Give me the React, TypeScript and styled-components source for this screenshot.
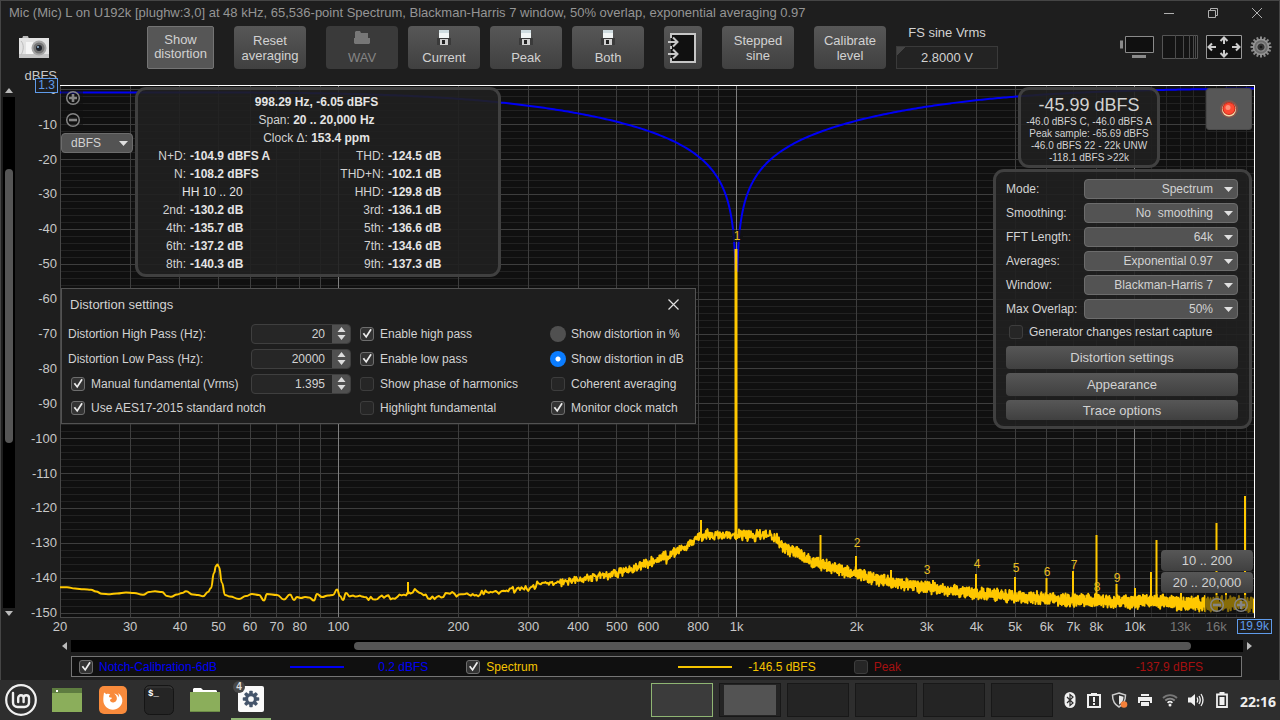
import React from "react";
import styled, { createGlobalStyle, css } from "styled-components";

const GlobalStyle = createGlobalStyle`
  *, *::before, *::after { box-sizing: border-box; }
  html, body { margin: 0; background: #1e1e1e; }
  body, button, input, select {
    font-family: "Liberation Sans", Arial, sans-serif;
    font-size: 13px;
    color: #d2d2d2;
  }
  button, input, select { margin: 0; padding: 0; border: 0; background: none; }
  svg { display: block; }
`;

/* ---------- chart geometry and data ---------- */

const PLOT_W = 1195;
const PLOT_H = 533;
const DECADE = 398.3;
const freqX = (f: number) => Math.log10(f / 20) * DECADE;
const dbY = (db: number) => 4.7 - db * 3.49;
const pctX = (x: number) => `${(x / PLOT_W) * 100}%`;
const pctY = (y: number) => `${(y / PLOT_H) * 100}%`;

type Point = [number, number];

const majorFreqs = [30, 40, 50, 60, 70, 80, 90, 200, 300, 400, 500, 600, 700, 800, 900, 2000, 3000, 4000, 5000, 6000, 7000, 8000, 9000];
const decadeFreqs = [100, 1000, 10000];
const minorFreqs = [11, 12, 13, 14, 15, 16, 17, 18, 19].map((k) => k * 1000);

const yTicks = Array.from({ length: 16 }, (_, i) => -10 * i);
const yMinor = Array.from({ length: 76 }, (_, i) => -2 * i).filter((d) => d % 10 !== 0);

const xTicks: { f: number; label: string; dim?: boolean }[] = [
  { f: 20, label: "20" }, { f: 30, label: "30" }, { f: 40, label: "40" }, { f: 50, label: "50" },
  { f: 60, label: "60" }, { f: 70, label: "70" }, { f: 80, label: "80" }, { f: 100, label: "100" },
  { f: 200, label: "200" }, { f: 300, label: "300" }, { f: 400, label: "400" }, { f: 500, label: "500" },
  { f: 600, label: "600" }, { f: 800, label: "800" }, { f: 1000, label: "1k" }, { f: 2000, label: "2k" },
  { f: 3000, label: "3k" }, { f: 4000, label: "4k" }, { f: 5000, label: "5k" }, { f: 6000, label: "6k" },
  { f: 7000, label: "7k" }, { f: 8000, label: "8k" }, { f: 10000, label: "10k" },
  { f: 13000, label: "13k", dim: true }, { f: 16000, label: "16k", dim: true },
];

const harmonicMarks: [string, number, number][] = [
  ["2", 797, 458], ["3", 867, 485], ["4", 917, 479], ["5", 956, 483],
  ["6", 987, 487], ["7", 1014, 480], ["8", 1037, 502], ["9", 1057, 493],
];

const notchPath = (() => {
  const pts: string[] = [];
  for (let x = 0; x <= 1194; x += x > 655 && x < 700 ? 0.25 : 2) {
    const u = 20 * Math.pow(10, x / DECADE) / 998.3;
    const a = Math.abs(1 - u * u);
    const mag = 20 * Math.log10(Math.max(a, 1e-6) / Math.sqrt(a * a + 15.5 * u * u));
    const db = Math.max(mag - 0.8 + (1.3 * x) / 1194, -52);
    pts.push(`${x.toFixed(2)},${dbY(db).toFixed(2)}`);
  }
  return "M" + pts.join("L");
})();

const lowBand: Point[] = [
  [0, 502.3], [7, 502.3], [15, 503.5], [24, 504.3], [31, 504.7], [36, 506.5], [42, 508.7], [50, 509.2],
  [57, 508.5], [66, 507.5], [74, 508], [83, 509.8], [89, 507], [95, 506.3], [102, 507], [107, 511], [111, 511.7],
  [117, 509.5], [122, 508], [126, 506.3], [133, 509.5], [138, 510], [143, 511.3], [148, 507], [151, 503], [154, 488],
  [156, 481], [157.5, 479.5], [159, 482], [162, 498], [165, 510], [170, 511.5], [179, 514], [186, 511],
  [192, 509], [199, 510], [204, 515.5], [207, 509], [217, 510], [224, 514.5], [230, 509.5],
  [234, 515], [237, 512], [241, 513], [245, 512], [249, 512.5], [254, 515.5], [257, 509], [262, 512],
  [268, 510.5], [273, 510], [277, 504.5], [280, 511], [283, 515], [286, 508], [290, 511.5],
];

const centre: Point[] = [
  [290, 511.5], [310, 512.5], [330, 512], [345, 510.5], [356, 506], [366, 511.5], [380, 511], [400, 508],
  [410, 510], [440, 506], [470, 503], [490, 498], [520, 495], [540, 491], [557, 489], [570, 485], [588, 478],
  [610, 471], [625, 463], [634, 455], [640, 450], [712, 450], [718, 455], [726, 464], [740, 469], [750, 476],
  [760, 479], [780, 485], [797, 489], [820, 495], [867, 503], [916, 508], [955, 512], [1013, 515],
  [1075, 517], [1100, 516], [1130, 519], [1194, 519],
];

const interpolate = (pts: Point[], x: number) => {
  for (let i = 1; i < pts.length; i++) {
    if (x <= pts[i][0]) {
      const [x0, y0] = pts[i - 1];
      const [x1, y1] = pts[i];
      return y0 + ((y1 - y0) * (x - x0)) / (x1 - x0);
    }
  }
  return pts[pts.length - 1][1];
};

const smoothPath = (pts: Point[]) => {
  let d = `M${pts[0][0]},${pts[0][1]}`;
  for (let i = 1; i < pts.length; i++) {
    const mx = (pts[i - 1][0] + pts[i][0]) / 2;
    d += `C${mx},${pts[i - 1][1]} ${mx},${pts[i][1]} ${pts[i][0]},${pts[i][1]}`;
  }
  return d;
};

const spectrumPath = (() => {
  let seed = 20170;
  const random = () => {
    seed = (seed * 1664525 + 1013904223) >>> 0;
    return seed / 4294967296;
  };
  let d = "";
  let x = 291;
  while (x < 1194) {
    const amp = x < 400 ? 3.5 : x < 600 ? 4 + (x - 400) / 80 : x < 900 ? 7 : 7 + (x - 900) / 180;
    const step = x < 400 ? 2.2 : x < 540 ? 2 - (x - 400) / 100 : x < 720 ? 0.5 : 0.22;
    const noise = random() + random() - 1;
    d += `L${x.toFixed(2)},${(interpolate(centre, x) + noise * amp).toFixed(2)}`;
    x += step;
  }
  return smoothPath(lowBand) + d;
})();

const spikes: Point[] = [
  [348, 497], [641, 435], [760.5, 450], [796, 471], [831, 485], [873, 495], [916, 489], [955, 492],
  [986.5, 493], [1013, 486], [1036.5, 450], [1056.5, 499], [1075, 503], [1091, 487], [1096.5, 455],
  [1121, 506], [1156.5, 438], [1166, 507], [1185, 411],
];

/* ---------- window frame ---------- */

const Screen = styled.div`
  min-height: 100vh;
  display: flex;
  flex-direction: column;
`;

const AppWindow = styled.main`
  flex: 1;
  display: flex;
  flex-direction: column;
  border: 1px solid #454545;
  border-width: 1px 1px 0;
  background: #1e1e1e;
`;

const TitleBar = styled.header`
  height: 25px;
  padding: 0 16px 2px 8px;
  display: flex;
  align-items: center;
  justify-content: space-between;
`;

const WindowTitle = styled.h1`
  margin: 0;
  font-size: 13px;
  font-weight: 400;
  color: #959595;
  white-space: nowrap;
`;

const WindowControls = styled.div`
  display: flex;
  gap: 32px;
`;

const IconButton = styled.button`
  display: block;
  line-height: 0;
`;

/* ---------- toolbar ---------- */

const Toolbar = styled.div`
  display: flex;
  align-items: flex-start;
  gap: 20px;
  height: 43px;
  padding: 0 7px 0 17px;
`;

const ToolGroup = styled.div`
  display: flex;
  gap: 10px;
`;

const face = css`
  background: linear-gradient(#575757, #404040);
  border-radius: 4px;
`;

const ToolButton = styled.button<{ $pressed?: boolean; $narrow?: boolean; $end?: boolean }>`
  ${face}
  width: ${(p) => (p.$narrow ? 38 : p.$pressed ? 67 : 72)}px;
  height: 43px;
  line-height: 15px;
  display: flex;
  flex-direction: column;
  align-items: center;
  justify-content: ${(p) => (p.$end ? "flex-start" : "center")};
  gap: 4px;
  padding-top: ${(p) => (p.$end ? 4 : 0)}px;
  ${(p) => p.$pressed && "background: #565656; border: 1px solid #747474; border-radius: 2px; line-height: 14px; padding-bottom: 2px;"}
  &:disabled { color: #858585; background: #3a3a3a; }
`;

const CameraButton = styled(IconButton)`
  width: 32px;
  margin: 9px 77px 0 0;
`;

const VoltField = styled.label`
  width: 102px;
  margin-left: -10px;
  text-align: center;
  line-height: 14px;
  position: relative;
  input {
    display: block;
    width: 102px;
    height: 23px;
    margin-top: 6px;
    text-align: center;
    border: 1px solid #3a3a3a;
    background: linear-gradient(135deg, #444 6px, #232323 6px);
  }
`;

const ToolIcons = styled.div`
  display: flex;
  align-items: center;
  gap: 8px;
  margin: 9px 0 0 auto;
`;

const Floppy = () => (
  <svg width="14" height="16" viewBox="0 0 14 16">
    <path d="M2 0h10v7H2z" fill="#cfdce0" />
    <path d="M2 3h10v5H2z" fill="#f2f6f6" />
    <path d="M0 8h14v7H0z" fill="#3a3a3a" />
    <path d="M3 9h8v6H3z" fill="#cfcfcf" />
    <path d="M5 10h3v4H5z" fill="#222" />
  </svg>
);

/* ---------- chart ---------- */

const ChartGrid = styled.section`
  flex: 1;
  display: grid;
  grid-template-columns: 12px 45px minmax(0, 1fr);
  grid-template-rows: minmax(533px, 1fr) 22px 12px;
  padding: 0 24px 0 2px;
  margin-top: 16px;
`;

const VerticalScroll = styled.div`
  display: flex;
  flex-direction: column;
  align-items: center;
  padding: 3px 0 1px;
`;

const VerticalTrack = styled.div`
  flex: 1;
  width: 12px;
  margin: 3px 0;
  background: #000;
  display: grid;
  grid-template-rows: 72fr 273fr 164fr;
  justify-items: center;
  &::after {
    content: "";
    grid-row: 2;
    width: 8px;
    border-radius: 4px;
    background: #555;
  }
`;

const HorizontalScroll = styled.div`
  grid-column: 3;
  display: flex;
  align-items: center;
  margin-right: 3px;
  padding-left: 2px;
`;

const HorizontalTrack = styled.div`
  flex: 1;
  height: 12px;
  margin: 0 4px;
  background: #000;
  display: grid;
  grid-template-columns: 283fr 837fr 52fr;
  align-items: center;
  &::after {
    content: "";
    grid-column: 2;
    height: 8px;
    border-radius: 4px;
    background: #555;
  }
`;

const ArrowButton = styled(IconButton)`
  display: flex;
  justify-content: center;
  align-items: center;
`;

const Axis = styled.div`
  position: relative;
  svg { overflow: visible; }
  text { font-size: 13px; fill: #c8c8c8; }
`;

const AxisTag = styled.output<{ $corner: "top" | "end" }>`
  position: absolute;
  padding: 0 2px;
  height: 15px;
  line-height: 13px;
  font-size: 12px;
  border: 1px solid #5f9bea;
  background: #1e1e1e;
  color: #5f9bea;
  ${(p) => (p.$corner === "top" ? "top: -7px; right: 2px;" : "top: 1px; right: -17px;")}
`;

const Plot = styled.div`
  position: relative;
  background: #101010;
  min-width: 0;
`;

const PlotSvg = styled.svg`
  position: absolute;
  inset: 0;
  width: 100%;
  height: 100%;
  text { font-size: 12px; fill: #e8bd20; text-anchor: middle; }
`;

const panel = css`
  position: absolute;
  border: 3px solid rgba(70, 70, 70, 0.85);
  border-radius: 11px;
  background: rgba(32, 32, 32, 0.9);
`;

const ZoomButton = styled(IconButton)`
  width: 16px;
  height: 16px;
`;

const VerticalZoom = styled.div`
  position: absolute;
  left: 1px;
  top: 5px;
  display: flex;
  flex-direction: column;
  gap: 6px;
  padding-left: 4px;
  width: 22px;
  background: rgba(16, 16, 16, 0.5);
`;

const HorizontalZoom = styled.div`
  position: absolute;
  right: 2px;
  bottom: 3px;
  width: 48px;
  height: 20px;
  padding: 0 4px;
  display: flex;
  justify-content: space-between;
  align-items: center;
  background: rgba(16, 16, 16, 0.5);
`;

const SelectBox = styled.div`
  position: relative;
  height: 20px;
  select {
    appearance: none;
    width: 100%;
    height: 20px;
    padding: 0 24px 0 8px;
    border: 1px solid #6c6c6c;
    border-radius: 4px;
    background: #535353;
    font-size: 12px;
    text-align-last: right;
  }
  svg {
    position: absolute;
    right: 5px;
    top: 8px;
    pointer-events: none;
  }
`;

const UnitSelect = styled.div`
  position: absolute;
  left: 1px;
  top: 48px;
  width: 72px;
  select { padding-left: 9px; text-align-last: left; }
`;

const Readout = styled.section`
  ${panel}
  left: 75px;
  top: 2px;
  width: 366px;
  height: 190px;
  padding-top: 3px;
  font-size: 12px;
  line-height: 18px;
  b { color: #e4e4e4; }
  p { margin: 0; padding-right: 3px; text-align: center; }
`;

const ReadoutTable = styled.table`
  width: 100%;
  border-collapse: collapse;
  table-layout: fixed;
  th { padding: 0; font-weight: 400; text-align: right; white-space: nowrap; }
  td { padding: 0 0 0 4px; font-weight: 700; color: #e4e4e4; white-space: nowrap; }
  td[colspan] { padding-left: 44px; font-weight: 400; }
`;

const Column = styled.col<{ $width: number }>`
  width: ${(p) => p.$width}px;
`;

const LevelPanel = styled.section`
  ${panel}
  right: 95px;
  top: 2px;
  width: 142px;
  height: 81px;
  padding-top: 5px;
  text-align: center;
  font-size: 10px;
  line-height: 12px;
  white-space: nowrap;
  strong { display: block; font-size: 18px; font-weight: 400; line-height: 20px; padding-bottom: 1px; }
`;

const RecordButton = styled.button`
  position: absolute;
  right: 3px;
  top: 3px;
  width: 46px;
  height: 42px;
  display: flex;
  justify-content: center;
  align-items: center;
  background: #575757;
  border: 1px solid #4a4a4a;
  border-radius: 3px;
`;

const SettingsPanel = styled.form`
  ${panel}
  right: 3px;
  top: 84px;
  width: 259px;
  height: 260px;
  padding: 7px 11px 0 10px;
  font-size: 12px;
`;

const SettingRow = styled.div`
  display: grid;
  grid-template-columns: 78px 1fr;
  align-items: center;
  margin-bottom: 4px;
`;

const WideButton = styled.button<{ $low?: boolean }>`
  ${face}
  display: block;
  width: 100%;
  height: ${(p) => (p.$low ? 20 : 23)}px;
  margin-bottom: 4px;
`;

const Tick = styled.input`
  appearance: none;
  flex: none;
  width: 14px;
  height: 14px;
  border: 1px solid #3d3d3d;
  border-radius: 3px;
  background: #262626;
  display: block;
  &:checked { border-color: #6e6e6e; background: #333; }
  &:checked::before {
    content: "";
    display: block;
    width: 12px;
    height: 12px;
    background: #eee;
    clip-path: polygon(14% 52%, 26% 44%, 42% 66%, 78% 10%, 90% 18%, 44% 90%);
  }
`;

const Radio = styled.input`
  appearance: none;
  flex: none;
  width: 16px;
  height: 16px;
  margin: 0 -1px;
  border-radius: 8px;
  background: #505050;
  &:checked { background: radial-gradient(circle, #fff 2px, #0a7cff 3px); }
`;

const CheckLabel = styled.label<{ $inset?: boolean }>`
  display: flex;
  align-items: center;
  gap: 6px;
  white-space: nowrap;
  padding-left: ${(p) => (p.$inset ? 3 : 0)}px;
`;

const GeneratorRow = styled.div`
  height: 23px;
  padding: 2px 0 0 3px;
`;

const Dialog = styled.section`
  position: absolute;
  left: 1px;
  top: 203px;
  width: 635px;
  height: 136px;
  border: 1px solid #525252;
  background: #1e1e1e;
  padding: 7px 6px 0;
`;

const DialogHead = styled.header`
  display: flex;
  justify-content: space-between;
  align-items: center;
  height: 17px;
  margin-bottom: 8px;
  padding: 0 10px 0 2px;
  h2 { margin: 0; font-size: 13px; font-weight: 400; }
`;

const DialogGrid = styled.form`
  display: grid;
  grid-template-columns: 183px 109px 191px 1fr;
  grid-template-rows: 25px 25px 25px 23px;
  align-items: center;
  font-size: 12px;
  white-space: nowrap;
`;

const Spinner = styled.div`
  width: 100px;
  height: 20px;
  display: flex;
  border: 1px solid #3f3f3f;
  border-radius: 4px;
  overflow: hidden;
  background: #262626;
  input {
    appearance: textfield;
    min-width: 0;
    flex: 1;
    padding-right: 7px;
    font-size: 12px;
    text-align: right;
  }
  input::-webkit-inner-spin-button { display: none; }
  button { width: 18px; display: flex; justify-content: center; align-items: center; background: #505050; }
`;

const RangeButtons = styled.div`
  position: absolute;
  right: 2px;
  bottom: 25px;
  display: flex;
  flex-direction: column;
  gap: 1px;
  button { ${face} width: 92px; height: 21px; }
`;

/* ---------- legend ---------- */

const Legend = styled.section`
  margin: 4px 37px 3px 70px;
  height: 21px;
  border: 1px solid #757575;
  background: #101010;
  display: grid;
  grid-template-columns: repeat(3, 1fr);
  padding-left: 7px;
  font-size: 12px;
`;

const LegendItem = styled.div<{ $color: string; $line: boolean }>`
  display: flex;
  align-items: center;
  color: ${(p) => p.$color};
  padding-right: 38px;
  i { margin-left: auto; width: 54px; height: 2px; background: ${(p) => (p.$line ? p.$color : "transparent")}; }
  output { width: 84px; text-align: right; }
`;

/* ---------- desktop panel ---------- */

const Taskbar = styled.footer`
  height: 40px;
  background: #2e2e2e;
  display: flex;
  align-items: center;
  padding: 0 4px 0 5px;
`;

const Launchers = styled.nav`
  flex: 1;
  display: flex;
  align-items: center;
  gap: 14px;
`;

const Launcher = styled.button<{ $active?: boolean }>`
  position: relative;
  width: 32px;
  height: 40px;
  display: flex;
  align-items: center;
  justify-content: center;
  ${(p) => p.$active && "padding-bottom: 2px; &::after { content: ''; position: absolute; left: -4px; right: -4px; bottom: 0; height: 2px; background: #8fb573; }"}
`;

const Count = styled.span`
  position: absolute;
  left: -2px;
  top: 1px;
  width: 12px;
  height: 12px;
  border-radius: 6px;
  background: #484848;
  font-size: 10px;
  font-weight: 700;
  line-height: 12px;
  color: #ddd;
`;

const Workspaces = styled.div`
  display: flex;
  gap: 6px;
`;

const Workspace = styled.button<{ $kind?: "current" | "busy" }>`
  width: 62px;
  height: 34px;
  border: 1px solid ${(p) => (p.$kind === "current" ? "#8fb573" : "#181818")};
  background: ${(p) => (p.$kind === "current" ? "#3b3b3b" : "#242424")};
  ${(p) => p.$kind === "busy" && "&::after { content: ''; display: block; height: 30px; margin: 0 4px; background: #535353; }"}
`;

const Tray = styled.div`
  display: flex;
  align-items: center;
  gap: 10px;
  margin-left: 10px;
`;

const Clock = styled.time`
  font-family: "Noto Sans", "Open Sans", sans-serif;
  font-size: 14px;
  font-weight: 700;
  color: #eee;
  padding-top: 2px;
`;

/* ---------- pieces ---------- */

const Caret = () => (
  <svg width="9" height="5" viewBox="0 0 9 5"><path d="M0 0h9L4.500 5z" fill="#e0e0e0" /></svg>
);

const Dropdown = ({ label, value, id }: { label?: string; value: string; id?: string }) => (
  <SelectBox>
    <select id={id} aria-label={label} defaultValue={value}>
      <option>{value}</option>
    </select>
    <Caret />
  </SelectBox>
);

const NumberField = ({ id, label, value, step }: { id?: string; label?: string; value: string; step: string }) => (
  <Spinner>
    <input id={id} aria-label={label} type="number" defaultValue={value} step={step} />
    <button type="button" aria-label="Step value">
      <svg width="9" height="13" viewBox="0 0 9 13"><path d="M0.500 5h8L4.500 0zM0.500 8h8L4.500 13z" fill="#ddd" /></svg>
    </button>
  </Spinner>
);

const Check = ({ text, on, inset }: { text: string; on?: boolean; inset?: boolean }) => (
  <CheckLabel $inset={inset}>
    <Tick type="checkbox" defaultChecked={on} />
    {text}
  </CheckLabel>
);

const ZoomGlyph = ({ plus }: { plus?: boolean }) => (
  <svg width="16" height="16" viewBox="0 0 16 16">
    <circle cx="8" cy="8" r="6.300" fill="none" stroke="#858585" strokeWidth="1.500" />
    <path d={plus ? "M4 8h8M8 4v8" : "M4 8h8"} stroke="#858585" strokeWidth="2.600" />
  </svg>
);

const Gear = ({ size, color, hole }: { size: number; color: string; hole: string }) => (
  <svg width={size} height={size} viewBox="-12 -12 24 24">
    {Array.from({ length: 8 }, (_, i) => (
      <rect key={i} x="-2.300" y="-11" width="4.600" height="6" rx="1" fill={color} transform={`rotate(${i * 45})`} />
    ))}
    <circle r="8" fill={color} />
    <circle r="3.800" fill={hole} />
  </svg>
);

const SettingsGear = () => (
  <svg width="22" height="22" viewBox="-11 -11 22 22">
    {Array.from({ length: 16 }, (_, i) => (
      <rect key={i} x="-1" y="-10.500" width="2" height="4" fill="#8b8b8b" transform={`rotate(${i * 22.5})`} />
    ))}
    <circle r="7.500" fill="#6c6c6c" stroke="#979797" strokeWidth="1.400" />
    <circle r="4.200" fill="#333" stroke="#8d8d8d" strokeWidth="1.200" />
    <circle r="1.300" fill="#161616" />
  </svg>
);

const readings: [string, string, string, string][] = [
  ["N+D:", "-104.9 dBFS A", "THD:", "-124.5 dB"],
  ["N:", "-108.2 dBFS", "THD+N:", "-102.1 dB"],
  ["", "HH 10 .. 20", "HHD:", "-129.8 dB"],
  ["2nd:", "-130.2 dB", "3rd:", "-136.1 dB"],
  ["4th:", "-135.7 dB", "5th:", "-136.6 dB"],
  ["6th:", "-137.2 dB", "7th:", "-134.6 dB"],
  ["8th:", "-140.3 dB", "9th:", "-137.3 dB"],
];

const settings: [string, string][] = [
  ["Mode:", "Spectrum"],
  ["Smoothing:", "No\u00a0 smoothing"],
  ["FFT Length:", "64k"],
  ["Averages:", "Exponential 0.97"],
  ["Window:", "Blackman-Harris 7"],
  ["Max Overlap:", "50%"],
];

const Chart = () => (
  <PlotSvg role="img" aria-label="Spectrum">
    <svg width="100%" height="100%" viewBox={`0 0 ${PLOT_W} ${PLOT_H}`} preserveAspectRatio="none">
      <g shapeRendering="crispEdges" strokeWidth="1">
        {yMinor.map((d) => <path key={d} d={`M0 ${dbY(d)}H1194`} stroke="#222" />)}
        {minorFreqs.map((f) => <path key={f} d={`M${freqX(f)} 0V532`} stroke="#262626" />)}
        {yTicks.map((d) => <path key={d} d={`M0 ${dbY(d)}H1194`} stroke="#3e3e3e" />)}
        {majorFreqs.map((f) => <path key={f} d={`M${freqX(f)} 0V532`} stroke="#3e3e3e" />)}
        {decadeFreqs.map((f) => <path key={f} d={`M${freqX(f)} 0V532`} stroke="#808080" />)}
        <path d="M0.500 0V532.500H1194" fill="none" stroke="#484848" />
      </g>
      <path d={notchPath} fill="none" stroke="#0000f5" strokeWidth="2" strokeLinejoin="round" />
      <path d={spectrumPath} fill="none" stroke="#ffc800" strokeWidth="2" strokeLinejoin="round" />
      {spikes.map(([x, y]) => (
        <path key={x} d={`M${x} ${y}V${interpolate(centre, x)}`} stroke="#ffc800" strokeWidth="2" />
      ))}
      <path d="M676 164V450" stroke="#ffc800" strokeWidth="3" />
      <path d="M672 145h11v12h-11z" fill="#101010" fillOpacity="0.75" />
      <path d="M0 0.500H1194.500V533" fill="none" stroke="#fff" shapeRendering="crispEdges" />
    </svg>
    <text x={pctX(677)} y={pctY(155)}>1</text>
    {harmonicMarks.map(([n, x, y]) => <text key={n} x={pctX(x)} y={pctY(y + 4)}>{n}</text>)}
  </PlotSvg>
);

const DistortionDialog = () => (
  <Dialog role="dialog" aria-label="Distortion settings">
    <DialogHead>
      <h2>Distortion settings</h2>
      <IconButton aria-label="Close dialog">
        <svg width="11" height="11" viewBox="0 0 11 11"><path d="M.5.5l10 10M10.500.5l-10 10" stroke="#e0e0e0" strokeWidth="1.200" /></svg>
      </IconButton>
    </DialogHead>
    <DialogGrid>
      <label htmlFor="highpass">Distortion High Pass (Hz):</label>
      <NumberField id="highpass" value="20" step="1" />
      <Check text="Enable high pass" on />
      <CheckLabel><Radio type="radio" name="unit" />Show distortion in %</CheckLabel>
      <label htmlFor="lowpass">Distortion Low Pass (Hz):</label>
      <NumberField id="lowpass" value="20000" step="1" />
      <Check text="Enable low pass" on />
      <CheckLabel><Radio type="radio" name="unit" defaultChecked />Show distortion in dB</CheckLabel>
      <Check text="Manual fundamental (Vrms)" on inset />
      <NumberField label="Fundamental in Vrms" value="1.395" step="0.001" />
      <Check text="Show phase of harmonics" />
      <Check text="Coherent averaging" />
      <Check text="Use AES17-2015 standard notch" on inset />
      <span />
      <Check text="Highlight fundamental" />
      <Check text="Monitor clock match" on />
    </DialogGrid>
  </Dialog>
);

export default function App() {
  return (
    <Screen>
      <GlobalStyle />
      <AppWindow>
        <TitleBar>
          <WindowTitle>
            Mic (Mic) L on U192k [plughw:3,0] at 48 kHz, 65,536-point Spectrum, Blackman-Harris 7 window, 50% overlap, exponential averaging 0.97
          </WindowTitle>
          <WindowControls>
            <IconButton aria-label="Minimize">
              <svg width="12" height="12" viewBox="0 0 12 12"><path d="M1 6.500h10" stroke="#b0b0b0" /></svg>
            </IconButton>
            <IconButton aria-label="Restore">
              <svg width="12" height="12" viewBox="0 0 12 12"><path d="M1.500 3.500h7v7h-7zM3.500 3V1.500h7v7H9" fill="none" stroke="#b0b0b0" /></svg>
            </IconButton>
            <IconButton aria-label="Close">
              <svg width="12" height="12" viewBox="0 0 12 12"><path d="M1 1l10 10M11 1L1 11" stroke="#b0b0b0" /></svg>
            </IconButton>
          </WindowControls>
        </TitleBar>

        <Toolbar>
          <CameraButton aria-label="Capture image">
            <svg width="32" height="24" viewBox="0 0 32 24">
              <path d="M5 1h5l1 3H4z" fill="#b9b9b9" />
              <path d="M1 3h30v20H1z" fill="#e3e3e3" />
              <path d="M1 19h30v4H1z" fill="#c4c4c4" />
              <path d="M3 6c3 3 3 9 0 14" fill="none" stroke="#bcbcbc" />
              <path d="M8 7h7v12H8z" fill="#f5f5f5" />
              <circle cx="21" cy="13" r="7.500" fill="#a5a5a5" />
              <circle cx="21" cy="13" r="5.500" fill="#757575" />
              <circle cx="21" cy="13" r="3" fill="#20242b" />
              <circle cx="20" cy="12" r="1" fill="#9ec0dd" />
            </svg>
          </CameraButton>
          <ToolButton $pressed>Show<br />distortion</ToolButton>
          <ToolButton>Reset<br />averaging</ToolButton>
          <ToolGroup>
            <ToolButton $end disabled>
              <svg width="18" height="16" viewBox="0 0 18 16"><path d="M2 2l1-1h4l1 2h7v5h2v5l-1 1H2l-1-1V8h1z" fill="#777" /></svg>
              WAV
            </ToolButton>
            {["Current", "Peak", "Both"].map((t) => (
              <ToolButton key={t} $end><Floppy />{t}</ToolButton>
            ))}
          </ToolGroup>
          <ToolButton $narrow aria-label="Import">
            <svg width="30" height="30" viewBox="0 0 30 30">
              <path d="M3 1h24v28H3z" fill="#101010" />
              <path d="M3 5V1h24v28H3v-4M3 13v3" fill="none" stroke="#c6c6c6" strokeWidth="2" />
              <path d="M-1 9h10M5 4.500L9.500 9 5 13.500M-1 21h10M5 16.500L9.500 21 5 25.500" fill="none" stroke="#c6c6c6" strokeWidth="2" />
            </svg>
          </ToolButton>
          <ToolButton>Stepped<br />sine</ToolButton>
          <ToolButton>Calibrate<br />level</ToolButton>
          <VoltField>
            FS sine Vrms
            <input defaultValue="2.8000 V" />
          </VoltField>
          <ToolIcons>
            <IconButton aria-label="Scrollbars">
              <svg width="34" height="24" viewBox="0 0 34 24">
                <path d="M0 5.500h3v8H0zM12 20h14v3H12z" fill="#8a8a8a" />
                <path d="M5.500 1.500h28v16h-28z" fill="#101010" stroke="#8a8a8a" />
              </svg>
            </IconButton>
            <IconButton aria-label="Frequency axis">
              <svg width="36" height="24" viewBox="0 0 36 24">
                <path d="M.5.500h35v23H.5z" fill="#141414" stroke="#555" />
                <path d="M13.500 0v24M21.500 0v24M27.500 0v24M31.500 0v24M33.500 0v24" stroke="#4a4a4a" />
              </svg>
            </IconButton>
            <IconButton aria-label="Graph limits">
              <svg width="36" height="24" viewBox="0 0 36 24">
                <path d="M.5.500h35v23H.5z" fill="#101010" stroke="#999" />
                <path d="M10 12H3M6 8.500L2.500 12 6 15.500M26 12h7M30 8.500l3.500 3.500-3.500 3.500M18 9V3M14.500 6L18 2.500 21.500 6M18 15v6M14.500 18l3.500 3.500 3.500-3.500" fill="none" stroke="#ccc" strokeWidth="2" />
              </svg>
            </IconButton>
            <IconButton aria-label="Graph settings"><SettingsGear /></IconButton>
          </ToolIcons>
        </Toolbar>

        <ChartGrid>
          <VerticalScroll>
            <ArrowButton aria-label="Scroll up"><svg width="8" height="6" viewBox="0 0 8 6"><path d="M0 5h8L4 0z" fill="#bbb" /></svg></ArrowButton>
            <VerticalTrack />
            <ArrowButton aria-label="Scroll down"><svg width="8" height="6" viewBox="0 0 8 6"><path d="M0 0h8L4 5z" fill="#bbb" /></svg></ArrowButton>
          </VerticalScroll>

          <Axis>
            <svg width="100%" height="100%">
              <text x="42" y="-5" textAnchor="end">dBFS</text>
              {yTicks.map((d) => (
                <text key={d} x="42" y={pctY(dbY(d) + 4)} textAnchor="end">{d === 0 ? "0" : d}</text>
              ))}
            </svg>
            <AxisTag $corner="top">1.3</AxisTag>
          </Axis>

          <Plot>
            <Chart />
            <VerticalZoom>
              <ZoomButton aria-label="Zoom in vertically"><ZoomGlyph plus /></ZoomButton>
              <ZoomButton aria-label="Zoom out vertically"><ZoomGlyph /></ZoomButton>
            </VerticalZoom>
            <UnitSelect><Dropdown label="Axis unit" value="dBFS" /></UnitSelect>

            <Readout>
              <p><b>998.29 Hz, -6.05 dBFS</b></p>
              <p>Span: <b>20 .. 20,000 Hz</b></p>
              <p>Clock Δ: <b>153.4 ppm</b></p>
              <ReadoutTable>
                <colgroup>
                  <Column $width={48} />
                  <Column $width={151} />
                  <Column $width={47} />
                  <col />
                </colgroup>
                <tbody>
                  {readings.map(([a, av, b, bv]) => (
                    <tr key={b}>
                      {a ? <><th scope="row">{a}</th><td>{av}</td></> : <td colSpan={2}>{av}</td>}
                      <th scope="row">{b}</th>
                      <td>{bv}</td>
                    </tr>
                  ))}
                </tbody>
              </ReadoutTable>
            </Readout>

            <LevelPanel>
              <strong>-45.99 dBFS</strong>
              -46.0 dBFS C, -46.0 dBFS A<br />
              Peak sample: -65.69 dBFS<br />
              -46.0 dBFS 22 - 22k UNW<br />
              -118.1 dBFS &gt;22k
            </LevelPanel>

            <RecordButton aria-label="Record">
              <svg width="20" height="20" viewBox="0 0 20 20">
                <circle cx="10" cy="10" r="9" fill="#ff5030" fillOpacity="0.25" />
                <circle cx="10" cy="10.500" r="7" fill="#f5d9a8" />
                <circle cx="10" cy="9.500" r="6.500" fill="#c8281a" />
                <circle cx="10" cy="9.500" r="5.500" fill="#ff4a32" />
                <circle cx="9" cy="8.500" r="2.500" fill="#ff8f78" />
              </svg>
            </RecordButton>

            <SettingsPanel>
              {settings.map(([name, value]) => (
                <SettingRow key={name}>
                  <label htmlFor={name}>{name}</label>
                  <Dropdown id={name} value={value} />
                </SettingRow>
              ))}
              <GeneratorRow><Check text="Generator changes restart capture" /></GeneratorRow>
              <WideButton type="button">Distortion settings</WideButton>
              <WideButton type="button">Appearance</WideButton>
              <WideButton type="button" $low>Trace options</WideButton>
            </SettingsPanel>

            <DistortionDialog />

            <RangeButtons>
              <button>10 .. 200</button>
              <button>20 .. 20,000</button>
            </RangeButtons>
            <HorizontalZoom>
              <ZoomButton aria-label="Zoom out horizontally"><ZoomGlyph /></ZoomButton>
              <ZoomButton aria-label="Zoom in horizontally"><ZoomGlyph plus /></ZoomButton>
            </HorizontalZoom>
          </Plot>

          <span />
          <span />
          <Axis>
            <svg width="100%" height="100%">
              {xTicks.map((t) => (
                <text key={t.f} x={pctX(freqX(t.f))} y="13" textAnchor="middle" style={t.dim ? { fill: "#777" } : undefined}>{t.label}</text>
              ))}
            </svg>
            <AxisTag $corner="end">19.9k</AxisTag>
          </Axis>

          <HorizontalScroll>
            <ArrowButton aria-label="Scroll left"><svg width="5" height="8" viewBox="0 0 5 8"><path d="M5 0v8L0 4z" fill="#bbb" /></svg></ArrowButton>
            <HorizontalTrack />
            <ArrowButton aria-label="Scroll right"><svg width="5" height="8" viewBox="0 0 5 8"><path d="M0 0v8l5-4z" fill="#bbb" /></svg></ArrowButton>
          </HorizontalScroll>
        </ChartGrid>

        <Legend>
          <LegendItem $color="#0000f5" $line><Check text="Notch-Calibration-6dB" on /><i /><output>0.2 dBFS</output></LegendItem>
          <LegendItem $color="#f5c400" $line><Check text="Spectrum" on /><i /><output>-146.5 dBFS</output></LegendItem>
          <LegendItem $color="#a51010" $line={false}><Check text="Peak" /><i /><output>-137.9 dBFS</output></LegendItem>
        </Legend>
      </AppWindow>

      <Taskbar>
        <Launchers>
          <Launcher aria-label="Menu">
            <svg width="32" height="32" viewBox="0 0 32 32" fill="none" stroke="#f0f0f0" strokeLinecap="round">
              <circle cx="16" cy="16" r="14.800" strokeWidth="2.200" />
              <path d="M8 9v9.500a4.500 4.500 0 0 0 4.500 4.500h7a4.500 4.500 0 0 0 4.500-4.500V14a2.700 2.700 0 0 0-5.400 0v4M18.600 18v-4a2.700 2.700 0 0 0-5.400 0v4" strokeWidth="2.400" />
            </svg>
          </Launcher>
          <Launcher aria-label="Show desktop">
            <svg width="30" height="24" viewBox="0 0 30 24"><path d="M0 0h30v24H0z" fill="#8bae5b" /><path d="M0 0h30v5H0z" fill="#5e7d40" /><path d="M4 2h2v2H4z" fill="#fff" /></svg>
          </Launcher>
          <Launcher aria-label="Firefox">
            <svg width="28" height="28" viewBox="0 0 28 28">
              <rect width="28" height="28" rx="5" fill="#f98b3c" />
              <path d="M5 6.500c1 .3 1.700.9 2.200 1.700 1.500-.6 3-.4 4 .2-1.400.8-1.500 2-.7 2.900 1 .3 2.300.2 2.500.7-.1 1-1.700 1.200-2.100 2 .3 2 2.300 3 4.200 2.300 2-.7 3.100-2.400 2.700-4.600-.3-1.900-1.500-3.300-2.800-4.200 2.700.5 4.300 2 5 3.900.2-1.700-.2-3.200-1-4.400 3.200 1.900 4.700 5 4.300 8.500-.6 4.600-4.500 8.200-9.400 8.200-5.400 0-9.500-4.200-9.600-9.400 0-3 .3-5 .7-7.800z" fill="#fff" />
            </svg>
          </Launcher>
          <Launcher aria-label="Terminal">
            <svg width="30" height="30" viewBox="0 0 30 30">
              <rect x=".5" y=".5" width="29" height="29" rx="5" fill="#252525" stroke="#151515" />
              <path d="M2 4q0-2 3-2h20q3 0 3 2" fill="none" stroke="#3d3d3d" />
              <text x="4" y="11" fontSize="9" fontFamily="Liberation Mono" fontWeight="700" fill="#fff">$_</text>
            </svg>
          </Launcher>
          <Launcher aria-label="Files">
            <svg width="30" height="26" viewBox="0 0 30 26"><path d="M3 6V2l1-1h7l2 2h13l1 1v4z" fill="#fff" /><path d="M0 5h30v20H0z" fill="#8bae5b" /><path d="M0 24h30v1H0z" fill="#6c8c46" /></svg>
          </Launcher>
          <Launcher $active aria-label="Application, 4 windows">
            <svg width="26" height="26" viewBox="0 0 26 26"><rect width="26" height="26" rx="2" fill="#fafafa" /><g transform="translate(4 4)"><Gear size={18} color="#44546a" hole="#fafafa" /></g></svg>
            <Count>4</Count>
          </Launcher>
        </Launchers>
        <Workspaces>
          <Workspace $kind="current" aria-label="Workspace 1" />
          <Workspace $kind="busy" aria-label="Workspace 2" />
          {[3, 4, 5, 6].map((n) => <Workspace key={n} aria-label={`Workspace ${n}`} />)}
        </Workspaces>
        <Tray>
          <svg width="14" height="16" viewBox="0 0 14 16"><rect x="1.500" width="11" height="16" rx="5.500" fill="#f0f0f0" /><path d="M4 5l6 6-3 2.500v-11L10 5l-6 6" fill="none" stroke="#2e2e2e" strokeWidth="1.200" /></svg>
          <svg width="14" height="16" viewBox="0 0 14 16"><path d="M1 3h12v12H1z" fill="none" stroke="#f0f0f0" strokeWidth="2" /><path d="M4 1h6v2H4zM6 5h2v5H6zM6 11h2v2H6z" fill="#f0f0f0" /></svg>
          <svg width="17" height="16" viewBox="0 0 17 16"><path d="M8 1l6.500 2c0 5-1 9-6.500 12C2.500 12 1.500 8 1.500 3z" fill="none" stroke="#ccc" strokeWidth="1.500" /><path d="M8 3.500l4.500 1.200c0 3-1 6-4.500 8z" fill="#e8e8e8" /><circle cx="13" cy="12.500" r="3.300" fill="#f5813a" /></svg>
          <svg width="14" height="14" viewBox="0 0 14 14"><path d="M3 1h8v2H3zM0 4h14v6h-2V8H2v2H0zM3 9h8v4H3z" fill="#f0f0f0" /></svg>
          <svg width="16" height="14" viewBox="0 0 16 14" fill="none" strokeWidth="1.800"><path d="M1 5a10 10 0 0 1 14 0" stroke="#777" /><path d="M3.300 7.500a6.800 6.800 0 0 1 9.400 0" stroke="#888" /><path d="M5.600 9.800a3.500 3.500 0 0 1 4.800 0" stroke="#eee" /><circle cx="8" cy="12" r="1.500" fill="#eee" /></svg>
          <svg width="16" height="14" viewBox="0 0 16 14"><path d="M0 4.500h3L7 1v12L3 9.500H0z" fill="#f0f0f0" /><path d="M9 4.500q1.500 2.500 0 5M11 3q2.500 4 0 8M13 1q4 6 0 12" fill="none" stroke="#f0f0f0" strokeWidth="1.300" /></svg>
          <svg width="16" height="16" viewBox="0 0 16 16"><path d="M3 2.500h10v12.500H3z" fill="none" stroke="#f0f0f0" strokeWidth="1.800" /><path d="M5.500 0h5v2h-5zM5.500 5h5v8h-5z" fill="#f0f0f0" /></svg>
          <Clock>22:16</Clock>
        </Tray>
      </Taskbar>
    </Screen>
  );
}
